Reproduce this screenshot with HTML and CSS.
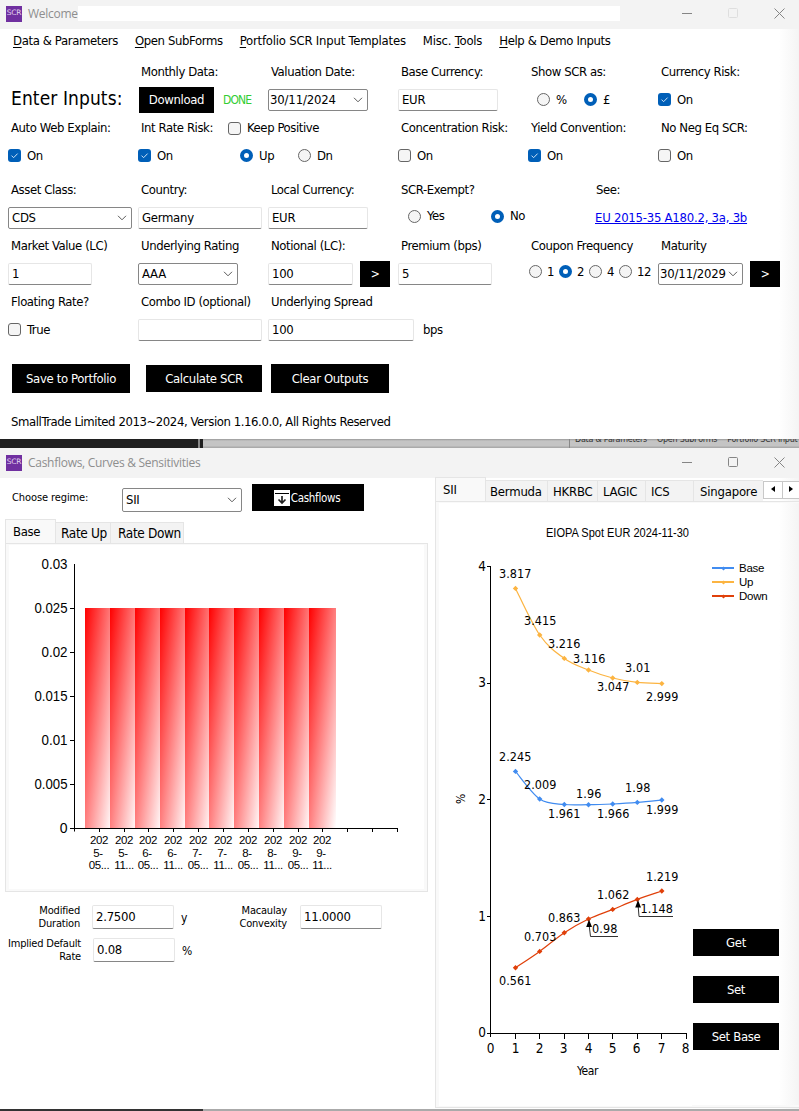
FILE: index.html
```
<!DOCTYPE html>
<html lang="en">

<head>
    <meta charset="UTF-8">
    <title>SCR</title>
    <link rel="stylesheet" href="styles.css">
</head>

<body>
    <!-- shared icons -->
    <svg class="defs" width="0" height="0">
        <symbol id="chevron" viewBox="0 0 10 6"><path d="M1 .8 5 4.8 9 .8" fill="none" stroke="#5a5a5a" /></symbol>
        <symbol id="tick" viewBox="0 0 13 13"><path d="M3.5 6.6 5.6 8.7 9.6 4.6" fill="none" stroke="#cfe3f6" /></symbol>
        <symbol id="min" viewBox="0 0 11 11"><path d="M0 5.5H10" fill="none" stroke="currentColor" /></symbol>
        <symbol id="max" viewBox="0 0 11 11"><rect x=".5" y=".5" width="9" height="9" rx="1" fill="none" stroke="currentColor" /></symbol>
        <symbol id="close" viewBox="0 0 11 11"><path d="M.5 .5 10.5 10.5M10.5 .5 .5 10.5" fill="none" stroke="currentColor" /></symbol>
    </svg>

    <!-- inputs window -->
    <section class="window main">
        <header class="titlebar">
            <span class="logo">SCR</span>
            <span class="title welcome">Welcome</span>
            <span class="blank"></span>
            <span class="winbtns">
                <svg width="11" height="11"><use href="#min" /></svg>
                <svg width="11" height="11" class="off"><use href="#max" /></svg>
                <svg width="11" height="11"><use href="#close" /></svg>
            </span>
        </header>
        <nav class="menu">
            <span><u>D</u>ata &amp; Parameters</span>
            <span><u>O</u>pen SubForms</span>
            <span class="loose"><u>P</u>ortfolio SCR Input Templates</span>
            <span class="loose">Misc. <u>T</u>ools</span>
            <span><u>H</u>elp &amp; Demo Inputs</span>
        </nav>

        <div class="form">
            <div class="cell heading"><h1>Enter Inputs:</h1></div>
            <div class="cell">
                <label>Monthly Data:</label>
                <div class="ctl"><button class="btn download">Download</button><span class="done">DONE</span></div>
            </div>
            <div class="cell">
                <label>Valuation Date:</label>
                <div class="ctl"><div class="select w100 date">30/11/2024<svg width="10" height="6"><use href="#chevron" /></svg></div></div>
            </div>
            <div class="cell">
                <label>Base Currency:</label>
                <div class="ctl"><input class="w100" value="EUR"></div>
            </div>
            <div class="cell">
                <label>Show SCR as:</label>
                <div class="ctl showas"><i class="radio"></i><span>%</span><i class="radio on"></i><span>£</span></div>
            </div>
            <div class="cell">
                <label>Currency Risk:</label>
                <div class="ctl"><i class="check on"><svg width="13" height="13"><use href="#tick" /></svg></i><span>On</span></div>
            </div>

            <div class="cell">
                <label>Auto Web Explain:</label>
                <div class="ctl"><i class="check on"><svg width="13" height="13"><use href="#tick" /></svg></i><span>On</span></div>
            </div>
            <div class="cell">
                <label class="rate">Int Rate Risk: <i class="check"></i><span>Keep Positive</span></label>
                <div class="ctl updown"><i class="check on"><svg width="13" height="13"><use href="#tick" /></svg></i><span>On</span><i class="radio on"></i><span>Up</span><i class="radio"></i><span>Dn</span></div>
            </div>
            <div class="cell"></div>
            <div class="cell">
                <label>Concentration Risk:</label>
                <div class="ctl"><i class="check"></i><span>On</span></div>
            </div>
            <div class="cell">
                <label>Yield Convention:</label>
                <div class="ctl"><i class="check on"><svg width="13" height="13"><use href="#tick" /></svg></i><span>On</span></div>
            </div>
            <div class="cell">
                <label>No Neg Eq SCR:</label>
                <div class="ctl"><i class="check"></i><span>On</span></div>
            </div>
        </div>

        <div class="form second">
            <div class="cell">
                <label>Asset Class:</label>
                <div class="ctl"><div class="select w124">CDS<svg width="10" height="6"><use href="#chevron" /></svg></div></div>
            </div>
            <div class="cell">
                <label>Country:</label>
                <div class="ctl"><input class="w124" value="Germany"></div>
            </div>
            <div class="cell">
                <label>Local Currency:</label>
                <div class="ctl"><input class="w100" value="EUR"></div>
            </div>
            <div class="cell">
                <label>SCR-Exempt?</label>
                <div class="ctl exempt"><i class="radio"></i><span>Yes</span><i class="radio on"></i><span>No</span></div>
            </div>
            <div class="cell see">
                <label>See:</label>
                <div class="ctl"><a href="#">EU 2015-35 A180.2, 3a, 3b</a></div>
            </div>
            <div class="cell"></div>

            <div class="cell">
                <label>Market Value (LC)</label>
                <div class="ctl"><input class="w84" value="1"></div>
            </div>
            <div class="cell">
                <label>Underlying Rating</label>
                <div class="ctl"><div class="select w100">AAA<svg width="10" height="6"><use href="#chevron" /></svg></div></div>
            </div>
            <div class="cell">
                <label>Notional (LC):</label>
                <div class="ctl"><input class="w85" value="100"><button class="btn go">&gt;</button></div>
            </div>
            <div class="cell">
                <label>Premium (bps)</label>
                <div class="ctl"><input class="w94" value="5"></div>
            </div>
            <div class="cell">
                <label>Coupon Frequency</label>
                <div class="ctl freq">
                    <div><i class="radio"></i><span>1</span></div>
                    <div><i class="radio on"></i><span>2</span></div>
                    <div><i class="radio"></i><span>4</span></div>
                    <div><i class="radio"></i><span>12</span></div>
                </div>
            </div>
            <div class="cell">
                <label>Maturity</label>
                <div class="ctl"><div class="select w85 date">30/11/2029<svg width="10" height="6"><use href="#chevron" /></svg></div><button class="btn go">&gt;</button></div>
            </div>

            <div class="cell">
                <label>Floating Rate?</label>
                <div class="ctl"><i class="check"></i><span>True</span></div>
            </div>
            <div class="cell">
                <label>Combo ID (optional)</label>
                <div class="ctl"><input class="w124" value=""></div>
            </div>
            <div class="cell">
                <label>Underlying Spread</label>
                <div class="ctl spread"><input class="w146" value="100"><span>bps</span></div>
            </div>
        </div>

        <div class="actions">
            <button class="btn save">Save to Portfolio</button>
            <button class="btn calc">Calculate SCR</button>
            <button class="btn clear">Clear Outputs</button>
        </div>
        <footer class="copy">SmallTrade Limited 2013~2024, Version 1.16.0.0, All Rights Reserved</footer>
    </section>

    <!-- windows behind -->
    <div class="behind">
        <span class="dark"></span><span class="edge"></span>
        <div class="peek"><span>Data &amp; Parameters</span><span>Open SubForms</span><span>Portfolio SCR Input</span></div>
    </div>

    <!-- cashflows window -->
    <section class="window cash">
        <header class="titlebar">
            <span class="logo">SCR</span>
            <span class="title">Cashflows, Curves &amp; Sensitivities</span>
            <span class="winbtns">
                <svg width="11" height="11"><use href="#min" /></svg>
                <svg width="11" height="11"><use href="#max" /></svg>
                <svg width="11" height="11"><use href="#close" /></svg>
            </span>
        </header>
        <div class="split">
            <div class="left">
                <div class="regime">
                    <span class="small">Choose regime:</span>
                    <div class="select">SII<svg width="10" height="6"><use href="#chevron" /></svg></div>
                    <button class="btn flows">
                        <svg width="16" height="16" viewBox="0 0 16 16">
                            <rect width="16" height="16" fill="#fff" />
                            <path d="M1 3.5H15" stroke="#000" />
                            <path d="M8 6V13M4.5 9.5 8 13 11.5 9.5" fill="none" stroke="#222" stroke-width="1.7" />
                        </svg>
                        <span>Cashflows</span>
                    </button>
                </div>
                <div class="tabs lefttabs">
                    <span class="tab active t1">Base</span><span class="tab t2">Rate Up</span><span class="tab t3">Rate Down</span>
                </div>
                <div class="pane barpane">
                    <svg class="barchart" width="415" height="344" viewBox="9 545 415 344">
                        <defs>
                            <linearGradient id="fade" x1="0" y1="0" x2="1" y2="1">
                                <stop offset="0" stop-color="#ff0000" />
                                <stop offset="1" stop-color="#ffffff" />
                            </linearGradient>
                        </defs>
                        <g fill="url(#fade)">
                            <rect x="85" y="608" width="27" height="220" />
                            <rect x="110" y="608" width="27" height="220" />
                            <rect x="135" y="608" width="27" height="220" />
                            <rect x="160" y="608" width="27" height="220" />
                            <rect x="185" y="608" width="27" height="220" />
                            <rect x="209" y="608" width="27" height="220" />
                            <rect x="234" y="608" width="27" height="220" />
                            <rect x="259" y="608" width="27" height="220" />
                            <rect x="284" y="608" width="27" height="220" />
                            <rect x="309" y="608" width="27" height="220" />
                        </g>
                        <path class="axis" d="M74.5 564V831.5M70 828.5H398M70 608.5H74M70 652.5H74M70 696.5H74M70 740.5H74M70 784.5H74M99.5 828V832M124.5 828V832M148.5 828V832M173.5 828V832M198.5 828V832M223.5 828V832M248.5 828V832M273.5 828V832M298.5 828V832M322.5 828V832M347.5 828V832M372.5 828V832M397.5 828V832" />
                        <g class="ylab">
                            <text x="67.5" y="569" textLength="26" lengthAdjust="spacingAndGlyphs">0.03</text>
                            <text x="67.5" y="613" textLength="33" lengthAdjust="spacingAndGlyphs">0.025</text>
                            <text x="67.5" y="657" textLength="26" lengthAdjust="spacingAndGlyphs">0.02</text>
                            <text x="67.5" y="701" textLength="33" lengthAdjust="spacingAndGlyphs">0.015</text>
                            <text x="67.5" y="745" textLength="26" lengthAdjust="spacingAndGlyphs">0.01</text>
                            <text x="67.5" y="789" textLength="33" lengthAdjust="spacingAndGlyphs">0.005</text>
                            <text x="67.5" y="833">0</text>
                        </g>
                        <g class="xlab">
                            <text><tspan x="99" y="844">202</tspan><tspan x="98" y="857">5-</tspan><tspan x="99" y="869">05...</tspan></text>
                            <text><tspan x="124" y="844">202</tspan><tspan x="123" y="857">5-</tspan><tspan x="124" y="869">11...</tspan></text>
                            <text><tspan x="148" y="844">202</tspan><tspan x="147" y="857">6-</tspan><tspan x="148" y="869">05...</tspan></text>
                            <text><tspan x="173" y="844">202</tspan><tspan x="172" y="857">6-</tspan><tspan x="173" y="869">11...</tspan></text>
                            <text><tspan x="198" y="844">202</tspan><tspan x="197" y="857">7-</tspan><tspan x="198" y="869">05...</tspan></text>
                            <text><tspan x="223" y="844">202</tspan><tspan x="222" y="857">7-</tspan><tspan x="223" y="869">11...</tspan></text>
                            <text><tspan x="248" y="844">202</tspan><tspan x="247" y="857">8-</tspan><tspan x="248" y="869">05...</tspan></text>
                            <text><tspan x="273" y="844">202</tspan><tspan x="272" y="857">8-</tspan><tspan x="273" y="869">11...</tspan></text>
                            <text><tspan x="298" y="844">202</tspan><tspan x="297" y="857">9-</tspan><tspan x="298" y="869">05...</tspan></text>
                            <text><tspan x="322" y="844">202</tspan><tspan x="321" y="857">9-</tspan><tspan x="322" y="869">11...</tspan></text>
                        </g>
                    </svg>
                </div>
                <div class="stats">
                    <span class="small name">Modified<br>Duration</span>
                    <input value="2.7500">
                    <span class="small unit">y</span>
                    <span class="small name mac">Macaulay<br>Convexity</span>
                    <input value="11.0000">
                </div>
                <div class="stats">
                    <span class="small name wide">Implied Default<br>Rate</span>
                    <input value="0.08">
                    <span class="small unit">%</span>
                </div>
            </div>

            <div class="right">
                <div class="tabs righttabs">
                    <span class="tab active r1">SII</span><span class="tab r2">Bermuda</span><span class="tab r3">HKRBC</span><span class="tab r4">LAGIC</span><span class="tab r5">ICS</span><span class="tab r6">Singapore</span>
                    <span class="spin"><svg width="4" height="6"><path d="M4 0V6L0 3Z" /></svg></span>
                    <span class="spin"><svg width="4" height="6"><path d="M0 0V6L4 3Z" /></svg></span>
                </div>
                <div class="pane curvepane">
                    <svg class="curves" width="253" height="603" viewBox="439 503 253 603">
                        <text class="charttitle" x="546" y="537" textLength="143" lengthAdjust="spacingAndGlyphs">EIOPA Spot EUR 2024-11-30</text>
                        <path class="axis" d="M490.5 566V1037M487 566.5H490M487 683.5H490M487 799.5H490M487 916.5H490M487 1033.5H687M515.5 1033V1039M539.5 1033V1039M564.5 1033V1039M588.5 1033V1039M612.5 1033V1039M637.5 1033V1039M661.5 1033V1039M686.5 1033V1039" />
                        <g class="ynum">
                            <text x="485.5" y="571">4</text>
                            <text x="485.5" y="687">3</text>
                            <text x="485.5" y="804">2</text>
                            <text x="485.5" y="921">1</text>
                            <text x="485.5" y="1037">0</text>
                        </g>
                        <g class="xnum">
                            <text x="490.5" y="1053">0</text>
                            <text x="515.5" y="1053">1</text>
                            <text x="539.5" y="1053">2</text>
                            <text x="563.5" y="1053">3</text>
                            <text x="588.5" y="1053">4</text>
                            <text x="612.5" y="1053">5</text>
                            <text x="636.5" y="1053">6</text>
                            <text x="661.5" y="1053">7</text>
                            <text x="685.5" y="1053">8</text>
                        </g>
                        <text class="axisname" x="587.5" y="1075">Year</text>
                        <text class="axisname" transform="translate(465 799) rotate(-90)">%</text>

                        <g class="series up">
                            <path d="M515.5 588.4C519.5 596.2 531.6 623.3 539.7 635S556.2 652.6 564.3 658.4 580.4 666.7 588.5 670 604.6 675.9 612.7 678 629.2 681.5 637.3 682.4 657.8 683.4 661.8 683.6" />
                            <path class="dots" d="M512.8 588.4l2.7-2.7 2.7 2.7-2.7 2.7zM537 635l2.7-2.7 2.7 2.7-2.7 2.7zM561.6 658.4l2.7-2.7 2.7 2.7-2.7 2.7zM585.8 670l2.7-2.7 2.7 2.7-2.7 2.7zM610 678l2.7-2.7 2.7 2.7-2.7 2.7zM634.6 682.4l2.7-2.7 2.7 2.7-2.7 2.7zM659.1 683.6l2.7-2.7 2.7 2.7-2.7 2.7z" />
                        </g>
                        <g class="series base">
                            <path d="M515.5 771.4C519.5 776 531.6 793.5 539.7 799S556.2 803.6 564.3 804.5 580.4 804.7 588.5 804.7 604.6 804.4 612.7 804 629.2 803.1 637.3 802.4 657.8 800.4 661.8 800" />
                            <path class="dots" d="M512.8 771.4l2.7-2.7 2.7 2.7-2.7 2.7zM537 799l2.7-2.7 2.7 2.7-2.7 2.7zM561.6 804.5l2.7-2.7 2.7 2.7-2.7 2.7zM585.8 804.7l2.7-2.7 2.7 2.7-2.7 2.7zM610 804l2.7-2.7 2.7 2.7-2.7 2.7zM634.6 802.4l2.7-2.7 2.7 2.7-2.7 2.7zM659.1 800l2.7-2.7 2.7 2.7-2.7 2.7z" />
                        </g>
                        <g class="series down">
                            <path d="M515.5 967.7C519.5 965 531.6 957.2 539.7 951.4S556.2 938.1 564.3 932.7 580.4 922.9 588.5 919 604.6 912.7 612.7 909.4 629.2 902.5 637.3 899.4 657.8 892.4 661.8 891" />
                            <path class="dots" d="M512.8 967.7l2.7-2.7 2.7 2.7-2.7 2.7zM537 951.4l2.7-2.7 2.7 2.7-2.7 2.7zM561.6 932.7l2.7-2.7 2.7 2.7-2.7 2.7zM585.8 919l2.7-2.7 2.7 2.7-2.7 2.7zM610 909.4l2.7-2.7 2.7 2.7-2.7 2.7zM634.6 899.4l2.7-2.7 2.7 2.7-2.7 2.7zM659.1 891l2.7-2.7 2.7 2.7-2.7 2.7z" />
                        </g>
                        <!-- callouts for the shifted labels -->
                        <path class="callout" d="M589 924 590.5 936.5H618M638 904 639 916.5H673" />
                        <path d="M589 919.5 592 927H586.2ZM638 900 641 907.5H635.2Z" />

                        <g class="point">
                            <text x="515" y="578" textLength="32">3.817</text>
                            <text x="540" y="625" textLength="32">3.415</text>
                            <text x="564" y="648" textLength="32">3.216</text>
                            <text x="589" y="663" textLength="32">3.116</text>
                            <text x="613" y="691" textLength="32">3.047</text>
                            <text x="637.5" y="672" textLength="25">3.01</text>
                            <text x="662" y="701" textLength="32">2.999</text>
                            <text x="515" y="761" textLength="32">2.245</text>
                            <text x="540" y="789" textLength="32">2.009</text>
                            <text x="564" y="818" textLength="32">1.961</text>
                            <text x="588.5" y="798" textLength="25">1.96</text>
                            <text x="613" y="818" textLength="32">1.966</text>
                            <text x="637.5" y="792" textLength="25">1.98</text>
                            <text x="662" y="814" textLength="32">1.999</text>
                            <text x="515" y="985" textLength="32">0.561</text>
                            <text x="540" y="941" textLength="32">0.703</text>
                            <text x="564" y="922" textLength="32">0.863</text>
                            <text x="604.5" y="933" textLength="25">0.98</text>
                            <text x="613" y="899" textLength="32">1.062</text>
                            <text x="656.5" y="913" textLength="32">1.148</text>
                            <text x="662" y="881" textLength="32">1.219</text>
                        </g>
                    </svg>
                    <div class="side">
                        <ul class="legend">
                            <li><i class="base"></i>Base</li>
                            <li><i class="up"></i>Up</li>
                            <li><i class="down"></i>Down</li>
                        </ul>
                        <div class="sidebtns">
                            <button class="btn">Get</button>
                            <button class="btn">Set</button>
                            <button class="btn">Set Base</button>
                        </div>
                    </div>
                </div>
            </div>
        </div>
    </section>
    <div class="bottomedge"><span></span></div>
</body>

</html>
```
FILE: styles.css
```
* {
    margin: 0;
    padding: 0;
    box-sizing: border-box;
}

body {
    width: 799px;
    height: 1111px;
    overflow: hidden;
    background: #fff;
    color: #000;
    font: 13px/16px "DejaVu Sans Condensed", "DejaVu Sans", sans-serif;
    font-stretch: condensed;
    letter-spacing: -0.42px;
    white-space: nowrap;
}

input,
button {
    font: inherit;
    letter-spacing: inherit;
    color: inherit;
    border-radius: 0;
}

svg {
    display: block;
    flex: none;
}

.defs {
    position: absolute;
}

/* windows */
.window {
    display: flex;
    flex-direction: column;
    background: linear-gradient(to left, #f4f4f4, #fff 20px);
}

.main {
    height: 439px;
}

.cash {
    height: 661px;
}

.titlebar {
    display: flex;
    align-items: center;
    flex: none;
    height: 29px;
    padding: 0 14px 2px 6px;
    background: #f3f3f3;
}

.cash .titlebar {
    height: 30px;
    padding-bottom: 1px;
}

.logo {
    width: 16px;
    height: 16px;
    background: #7030a0;
    color: #e3d3ee;
    font: 7.5px/14px "DejaVu Sans", sans-serif;
    letter-spacing: -0.2px;
    text-align: center;
}

.title {
    margin-left: 6px;
    color: #8e8e8e;
    font: 12px/16px "Open Sans", sans-serif;
    letter-spacing: -0.28px;
}

.welcome {
    width: 50px;
}

.blank {
    width: 542px;
    height: 15px;
    background: #fff;
}

.winbtns {
    display: flex;
    gap: 35px;
    margin-left: auto;
    color: #858585;
}

.winbtns .off {
    color: #dedede;
}

.menu {
    display: flex;
    gap: 17px;
    flex: none;
    height: 29px;
    padding-left: 13px;
    line-height: 24px;
}

.menu span {
    letter-spacing: -0.38px;
}

.menu .loose {
    letter-spacing: -0.22px;
}

.menu u {
    text-underline-offset: 2px;
}

/* form grid, six columns */
.form {
    display: grid;
    grid-template-columns: repeat(6, 130px);
    grid-auto-rows: 56px;
    padding-left: 8px;
}

.second {
    margin-top: 6px;
}

.cell label {
    display: flex;
    align-items: center;
    height: 28px;
    padding-left: 3px;
}

.ctl {
    display: flex;
    align-items: center;
    height: 27px;
}

.ctl > * {
    flex: none;
}

.heading {
    padding: 27px 0 0 3px;
}

h1 {
    font-size: 19px;
    font-weight: normal;
    line-height: 26px;
    letter-spacing: 0.1px;
}

.check,
.radio {
    flex: none;
    width: 13px;
    height: 13px;
    margin-right: 6px;
    border: 1px solid #666;
    background: #f5f5f5;
    border-radius: 3px;
}

.check.on {
    border: 0;
    background: #005fb8;
}

.radio {
    border-radius: 50%;
}

.radio.on {
    border: 4px solid #005fb8;
    background: #fff;
}

.showas {
    padding-left: 9px;
}

.showas span {
    width: 28px;
}

.updown .radio.on {
    margin-left: 60px;
}

.updown span {
    width: 23px;
}

.updown .radio.on + span {
    width: 39px;
}

.rate .check {
    margin-left: 15px;
}

.exempt {
    padding: 0 0 3px 10px;
}

.exempt span {
    width: 64px;
}

.see {
    padding-left: 65px;
}

.see a {
    margin-left: 2px;
    color: #0000ee;
    letter-spacing: -0.24px;
}

.freq {
    padding: 0 0 4px 1px;
}

.freq div {
    display: flex;
    align-items: center;
    width: 30px;
}

.freq .radio {
    margin-right: 5px;
}

.spread span {
    margin-left: 9px;
}

input,
.select {
    height: 22px;
    padding: 0 3px;
    background: #fff;
    border: 1px solid #e6e6e6;
    border-bottom-color: #868686;
    border-radius: 2px;
    outline: 0;
    letter-spacing: -0.28px;
}

.select {
    display: flex;
    align-items: center;
    justify-content: space-between;
    padding: 0 4px 0 3px;
    border-color: #868686;
}

.date {
    padding-left: 1px;
    padding-top: 1px;
    letter-spacing: -0.15px;
}

.w84 { width: 84px; }
.w85 { width: 85px; }
.w94 { width: 94px; }
.w100 { width: 100px; }
.w124 { width: 124px; }
.w146 { width: 146px; }

.btn {
    display: flex;
    align-items: center;
    justify-content: center;
    height: 27px;
    border: 0;
    background: #000;
    color: #fff;
    letter-spacing: -0.35px;
}

.go {
    width: 30px;
    height: 26px;
    margin-left: 7px;
    font-size: 12px;
}

.download {
    width: 75px;
    height: 26px;
    margin: 0 9px 0 1px;
}

.done {
    color: #32cd32;
    font-size: 12px;
    letter-spacing: -0.9px;
}

.actions {
    display: flex;
    align-items: center;
    flex: none;
    height: 29px;
    margin: 20px 0 0 12px;
}

.save,
.clear {
    width: 118px;
    height: 29px;
}

.calc {
    width: 116px;
    margin: 0 9px 0 16px;
}

.copy {
    padding: 21px 0 0 11px;
}

/* strip of other windows showing through */
.behind {
    display: flex;
    height: 9px;
    background: linear-gradient(#999, #c4c4c4 2px, #c4c4c4 7px, #aaa 8px);
    overflow: hidden;
}

.behind > * {
    flex: none;
}

.dark {
    width: 198px;
    background: #202020;
}

.edge {
    width: 5px;
    background: #202020;
    border-left: 2px solid #888;
}

.peek {
    display: flex;
    gap: 10px;
    margin-left: 366px;
    padding-left: 5px;
    border-left: 1px solid #888;
    color: #333;
    font: 8px/12px "DejaVu Sans", sans-serif;
    letter-spacing: -0.25px;
}

.peek span {
    margin-top: -5px;
}

/* cashflows window */
.split {
    display: flex;
    flex: 1;
}

.left {
    width: 435px;
    padding-left: 5px;
}

.small {
    font-size: 11px;
    line-height: 13px;
    letter-spacing: -0.2px;
}

.regime {
    display: flex;
    align-items: flex-start;
    height: 42px;
    padding: 6px 0 0 7px;
}

.regime .small {
    width: 110px;
    margin-top: 7px;
    letter-spacing: -0.1px;
}

.regime .select {
    width: 120px;
    height: 24px;
    margin: 4px 10px 0 0;
}

.flows {
    width: 112px;
    gap: 1px;
    padding-right: 2px;
    font-size: 11.5px;
    letter-spacing: -0.3px;
}

.tabs {
    display: flex;
    align-items: flex-end;
}

.tab {
    flex: none;
    height: 21px;
    padding-left: 5px;
    background: #f3f3f3;
    border: solid #e5e5e5;
    border-width: 1px 1px 0 0;
    font-size: 13.5px;
    line-height: 21px;
    letter-spacing: -0.35px;
}

.tab.active {
    height: 24px;
    padding-left: 7px;
    background: #f9f9f9;
    border-left-width: 1px;
    line-height: 23px;
    font-size: 13px;
}

.lefttabs { height: 23px; }
.t1 { width: 51px; }
.t2 { width: 55px; }
.t3 { width: 73px; padding-left: 7px; }

.righttabs { height: 23px; }
.r1 { width: 51px; }
.r2 { width: 62px; padding-left: 4px; }
.r3 { width: 50px; }
.r4 { width: 48px; }
.r5 { width: 48px; padding-left: 5px; }
.r6 { width: 69px; padding-left: 6px; border-right: 0; }

.righttabs .tab {
    font-size: 13px;
    letter-spacing: -0.2px;
}

.spin {
    display: flex;
    align-items: center;
    justify-content: center;
    flex: none;
    width: 20px;
    height: 18px;
    margin-bottom: 2px;
    padding-bottom: 2px;
    background: #fff;
    border: 1px solid #c8c8c8;
}

.spin + .spin {
    width: 18px;
    margin-left: -1px;
}

.pane {
    border: 1px solid #e5e5e5;
    background: #f9f9f9;
}

.barpane {
    width: 423px;
    height: 349px;
    padding: 1px 3px;
}

.barchart {
    background: #fff;
}

.axis {
    fill: none;
    stroke: #000;
}

.ylab,
.ynum {
    text-anchor: end;
}

.ylab {
    font: 14px "Liberation Sans", Arial, sans-serif;
    letter-spacing: 0;
}

.xlab {
    font: 11.5px "Liberation Sans", Arial, sans-serif;
    letter-spacing: -0.4px;
    text-anchor: middle;
}

.stats {
    display: flex;
    align-items: center;
    height: 33px;
}

.barpane + .stats {
    margin-top: 8px;
}

.stats input {
    width: 82px;
    height: 24px;
    letter-spacing: -0.25px;
}

.name {
    width: 75px;
    margin-right: 12px;
    text-align: right;
}

.wide {
    width: 76px;
}

.unit {
    width: 40px;
    margin-left: 7px;
    padding-top: 3px;
    font-size: 12px;
}

.mac {
    width: 66px;
    margin-right: 13px;
}

.right {
    width: 364px;
}

.curvepane {
    display: flex;
    height: 607px;
    padding: 1px 0 2px 3px;
    border-right: 0;
}

.curves {
    background: #fff;
}

.charttitle {
    font: 12px "Liberation Sans", Arial, sans-serif;
    letter-spacing: 0;
}

.ynum,
.xnum {
    font-size: 13.5px;
}

.xnum,
.point,
.axisname {
    text-anchor: middle;
}

.point {
    font-size: 12.5px;
}

.axisname {
    font-size: 12px;
}

.series path {
    fill: none;
    stroke: currentColor;
    stroke-width: 1.2;
}

.series .dots {
    fill: currentColor;
    stroke: none;
}

.callout {
    fill: none;
    stroke: #333;
}

.base { color: #418cf0; }
.up { color: #fcb441; }
.down { color: #e0400a; }

.side {
    flex: 1;
    padding: 58px 0 0 1px;
    background: linear-gradient(to left, #f4f4f4, #fff 20px);
}

.legend {
    height: 368px;
    padding-left: 19px;
    list-style: none;
    font: 11.5px/14px "Liberation Sans", Arial, sans-serif;
    letter-spacing: -0.25px;
}

.legend li {
    display: flex;
    align-items: center;
}

.legend i {
    display: flex;
    align-items: center;
    justify-content: center;
    width: 22px;
    height: 2px;
    margin-right: 5px;
    background: currentColor;
}

.legend i::before {
    content: "";
    flex: none;
    width: 3px;
    height: 3px;
    background: currentColor;
    transform: rotate(45deg);
}

.sidebtns {
    display: flex;
    flex-direction: column;
    gap: 20px;
    width: 86px;
}

.bottomedge {
    height: 2px;
    background: #aaa;
}

.bottomedge span {
    display: block;
    width: 203px;
    height: 2px;
    background: #333;
}
```
